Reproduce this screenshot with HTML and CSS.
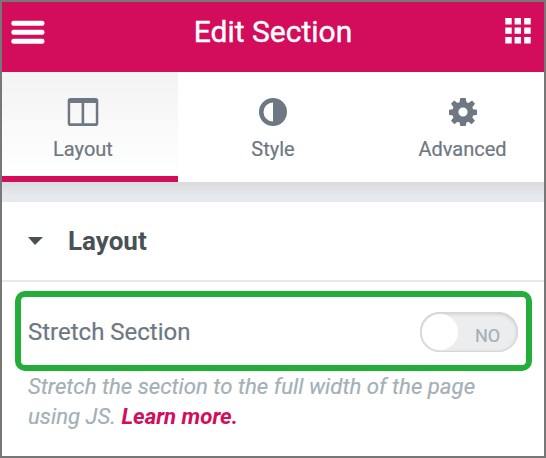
FILE: index.html
```
<!DOCTYPE html>
<html>
  <head>
    <meta charset="utf-8">
    <title>Edit Section</title>
    <link rel="stylesheet" href="styles.css">
  </head>
  <body>
    <div class="panel">
      <header class="header">
        <svg class="menu-icon" width="34" height="26" viewBox="0 0 34 26">
          <rect x="0.3" y="0.8" width="33.2" height="4.900" rx="2.2"/>
          <rect x="0.3" y="9.800" width="33.2" height="4.900" rx="2.2"/>
          <rect x="0.3" y="18.800" width="33.2" height="4.900" rx="2.2"/>
        </svg>
        <div class="title">Edit Section</div>
        <svg class="grid-icon" width="26" height="26" viewBox="0 0 26 26">
          <path d="M.3 0h6.4v6.5H.3zM9.6 0H16v6.5H9.6zM19.2 0h6.5v6.5h-6.5zM.3 9.4h6.4v6.4H.3zM9.6 9.4H16v6.4H9.6zM19.2 9.4h6.5v6.4h-6.5zM.3 19h6.4v6.5H.3zM9.6 19H16v6.5H9.6zM19.2 19h6.5v6.5h-6.5z"/>
        </svg>
      </header>

      <nav class="tabs">
        <div class="tab tab-layout active">
          <svg width="32" height="28" viewBox="0 0 32 28">
            <path fill-rule="evenodd" d="M3.5 0h25A2.8 2.8 0 0 1 31.300 2.800v22.400a2.800 2.800 0 0 1-2.800 2.800h-25a2.800 2.800 0 0 1-2.800-2.800V2.800A2.800 2.800 0 0 1 3.500 0zM3.200 5v20.300h11.400V5zM17.200 5v20.300h11.600V5z"/>
          </svg>
          <span>Layout</span>
        </div>
        <div class="tab">
          <svg width="28" height="28" viewBox="0 0 28 28">
            <path fill-rule="evenodd" d="M14 0a14 14 0 1 1 0 28a14 14 0 1 1 0-28zM14 4.500a9.500 9.500 0 0 0 0 19z"/>
          </svg>
          <span>Style</span>
        </div>
        <div class="tab tab-advanced">
          <svg width="28" height="28" viewBox="0 0 28 28">
            <path fill-rule="evenodd" d="M11.300 0h5.400l.8 4.200 2 .8 3.500-2.500L26 5.800 23.300 9.200l.8 2 3.900.6v5l-3.900.8-.8 2 2.700 3.200-3.400 3.400-3.200-2.500-2 .8-.7 3.500h-5.400l-.7-3.500-2-.8-3.200 2.500L2 22.800l2.500-3.200-.8-2-3.700-.8v-5l3.700-.6.8-2L2 5.800 5.200 2.500 8.500 5l2-.8zM14 9.400a4.600 4.600 0 1 0 0 9.200a4.600 4.600 0 1 0 0-9.200z"/>
          </svg>
          <span>Advanced</span>
        </div>
      </nav>

      <div class="section-title">
        <span class="arrow"></span>
        <span>Layout</span>
      </div>

      <div class="controls">
        <div class="control">
          <span class="label">Stretch Section</span>
          <div class="switch">
            <div class="handle"></div>
            <span class="switch-label">NO</span>
          </div>
        </div>
        <div class="description">Stretch the section to the full width of the page<br>using JS. <a class="link">Learn more.</a></div>
      </div>
    </div>
  </body>
</html>
```

FILE: styles.css
```
* {
  box-sizing: border-box;
}

body {
  margin: 0;
  font-family: Roboto, "Liberation Sans", sans-serif;
  color: #6d7882;
  -webkit-text-stroke: 0.2px;
}

svg {
  display: block;
}

.panel {
  width: 546px;
  height: 458px;
  border: 2px solid #777;
  background: #fff;
  overflow: hidden;
}

.header {
  display: flex;
  justify-content: space-between;
  height: 70px;
  padding: 0 13px 0 9px;
  background: #d30c5c;
  color: #fff;
  fill: #fff;
}

.menu-icon {
  margin-top: 18px;
}

.grid-icon {
  margin-top: 16px;
}

.title {
  margin-right: 4px;
  font-size: 30px;
  line-height: 59px;
  -webkit-text-stroke: 0.4px;
}

.tabs {
  display: flex;
  height: 110px;
  fill: #6d7882;
}

.tab {
  display: flex;
  flex-direction: column;
  align-items: center;
  width: 190px;
  padding-top: 26px;
  font-size: 20px;
  line-height: 24px;
}

.tab span {
  margin-top: 11px;
}

.tab-layout {
  width: 176px;
  padding-right: 14px;
}

.tab-advanced {
  width: 176px;
  padding-left: 13px;
}

.active {
  border-bottom: 6px solid #d30c5c;
  background: linear-gradient(#f3f3f3, #fff);
}

.section-title {
  display: flex;
  align-items: center;
  height: 100px;
  padding-left: 26px;
  border-top: 20px solid #e5e8ec;
  border-bottom: 2px solid #e6e9ec;
  border-image: linear-gradient(#dadbdf, #e6e9ed 14px) 20 0 2 0;
  color: #495157;
  font-size: 26px;
  font-weight: bold;
  -webkit-text-stroke: 0;
}

.arrow {
  margin-right: 25px;
  border: 7.500px solid transparent;
  border-width: 8px 8px 0 7px;
  border-top-color: #495157;
}

.controls {
  padding: 9px 12px 0 13px;
}

.control {
  display: flex;
  align-items: center;
  justify-content: space-between;
  height: 80px;
  padding: 0 8px 0 7px;
  border: 6px solid #23ad39;
  border-radius: 10px;
}

.label {
  padding-top: 2px;
  font-size: 24px;
}

.switch {
  display: flex;
  align-items: center;
  width: 98px;
  height: 40px;
  margin-top: 2px;
  padding-left: 2px;
  border-radius: 20px;
  background: #ecedef;
  box-shadow: inset 0 0 0 1px #d6d7d8, inset 0 1px 4px #bbb;
}

.handle {
  width: 36px;
  height: 36px;
  border-radius: 50%;
  background: #fff;
}

.switch-label {
  margin: 6px 0 0 17px;
  color: #a4afb7;
  font-size: 18px;
}

.description {
  padding-left: 13px;
  color: #a4afb7;
  font-size: 22.200px;
  font-style: italic;
  line-height: 30px;
}

.link {
  color: #d30c5c;
  font-weight: bold;
  -webkit-text-stroke: 0;
}
```
